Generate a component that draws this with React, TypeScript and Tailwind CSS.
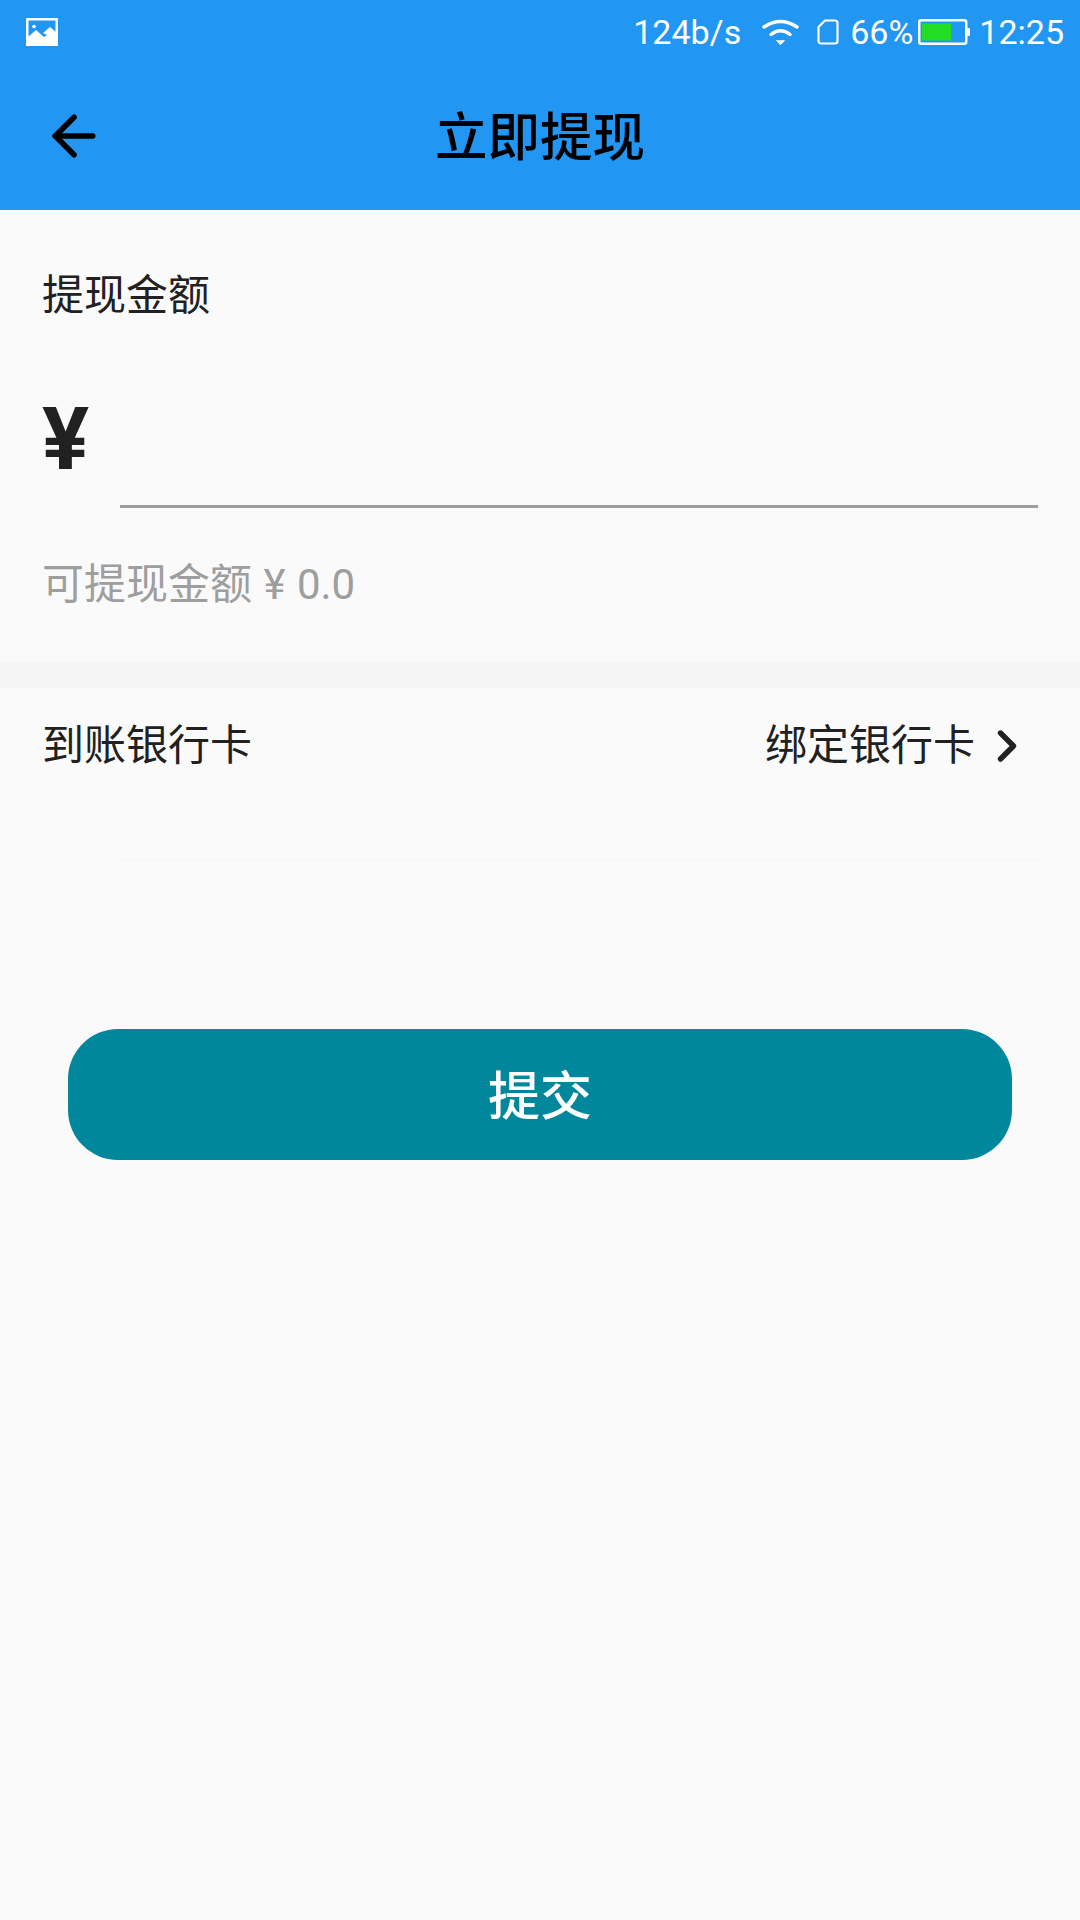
import React from 'react';
import { ArrowLeft, ChevronRight } from 'lucide-react';

const cjk = "font-['Roboto','Noto_Sans_CJK_SC',sans-serif]";

function StatusBar() {
  return (
    <div className="h-[64px] flex items-center pl-[26px] pr-[16px] text-white">
      <svg width="32" height="28" viewBox="0 0 32 28" className="shrink-0">
        <rect width="32" height="28" rx="1" fill="white" />
        <rect x="2.5" y="2.5" width="27" height="19" fill="#2196F3" />
        <circle cx="8" cy="8.5" r="1.8" fill="white" />
        <path d="M2 22 L2 19 L10 12 L18 19 L21 22 Z" fill="white" />
        <path d="M17 15 L24 9 L30 14 L30 24 L22 24 L18 19 L21 17 Z" fill="white" />
        <rect y="21" width="32" height="7" fill="white" />
      </svg>
      <div className="flex-1" />
      <span className="text-[34px] leading-none">124b/s</span>
      <svg width="37" height="26" viewBox="0 0 37 26" className="ml-[21px] shrink-0" fill="none" stroke="white" strokeWidth="3.4" strokeLinecap="round">
        <path d="M2 8 Q18.500 -3 35 8" />
        <path d="M9 15.500 Q18.500 8 28 15.500" />
        <path d="M15.500 22 L21.500 22 L18.500 25 Z" fill="white" strokeWidth="1.5" />
      </svg>
      <svg width="22" height="26" viewBox="0 0 22 26" className="ml-[18px] shrink-0" fill="none" stroke="white" strokeWidth="2.2">
        <path d="M8 1.500 H18 A2.500 2.500 0 0 1 20.500 4 V22 A2.500 2.500 0 0 1 18 24.500 H4 A2.500 2.500 0 0 1 1.500 22 V8 Z" strokeLinejoin="round" />
      </svg>
      <span className="ml-[11px] text-[34px] leading-none">66%</span>
      <svg width="52" height="26" viewBox="0 0 52 26" className="ml-[5px] shrink-0">
        <rect x="1.250" y="1.250" width="47" height="23.500" rx="2" fill="none" stroke="white" strokeWidth="2.500" />
        <rect x="4" y="4.500" width="29" height="17" fill="#22DD22" />
        <rect x="49" y="9" width="3" height="8" rx="1" fill="white" />
      </svg>
      <span className="ml-[9px] text-[34px] leading-none">12:25</span>
    </div>
  );
}

export default function App() {
  return (
    <div className={`w-[1080px] min-h-[1920px] bg-[#fafafa] ${cjk}`} lang="zh-CN">
      <div className="h-[210px] bg-[#2196f3]">
        <StatusBar />
        <div className="relative h-[146px] flex items-center justify-center">
          <ArrowLeft className="absolute left-[42px] top-[40px] w-[64px] h-[64px] text-black" strokeWidth={2.1} />
          <h1 className="text-[52.500px] leading-none font-medium text-black mt-[2px]">立即提现</h1>
        </div>
      </div>

      <div className="h-[452px] pl-[42px] pr-[42px] pt-[62px]">
        <div className="text-[42px] leading-[48px] text-[#212121]">提现金额</div>
        <div className="flex h-[140px] mt-[48px]">
          <span className="w-[78px] text-[88px] leading-[90px] font-bold text-[#212121] font-['Roboto',sans-serif] pt-[26px]">¥</span>
          <div className="flex-1 border-b-[3px] border-[#9e9e9e]" />
        </div>
        <div className="mt-[53px] text-[42px] leading-[48px] text-[#9e9e9e] [word-spacing:1px]">可提现金额 ¥ 0.0</div>
      </div>

      <div className="h-[26px] bg-[#f5f5f5]" />

      <div className="flex items-start justify-between pl-[42px] pr-[47px] pt-[34px] h-[172px] text-[42px] leading-[48px] text-[#212121]">
        <span>到账银行卡</span>
        <span className="flex items-center">
          绑定银行卡
          <ChevronRight className="ml-[6px] -my-[2px] w-[52px] h-[52px] text-[#212121]" strokeWidth={2.5} />
        </span>
      </div>
      <div className="ml-[118px] mr-[40px] h-px bg-[#f5f5f5]" />

      <div className="mx-[68px] mt-[168px] h-[131px] rounded-[50px] bg-[#00879c] flex items-center justify-center text-white text-[52px] font-medium pt-[7px]">
        提交
      </div>
    </div>
  );
}
